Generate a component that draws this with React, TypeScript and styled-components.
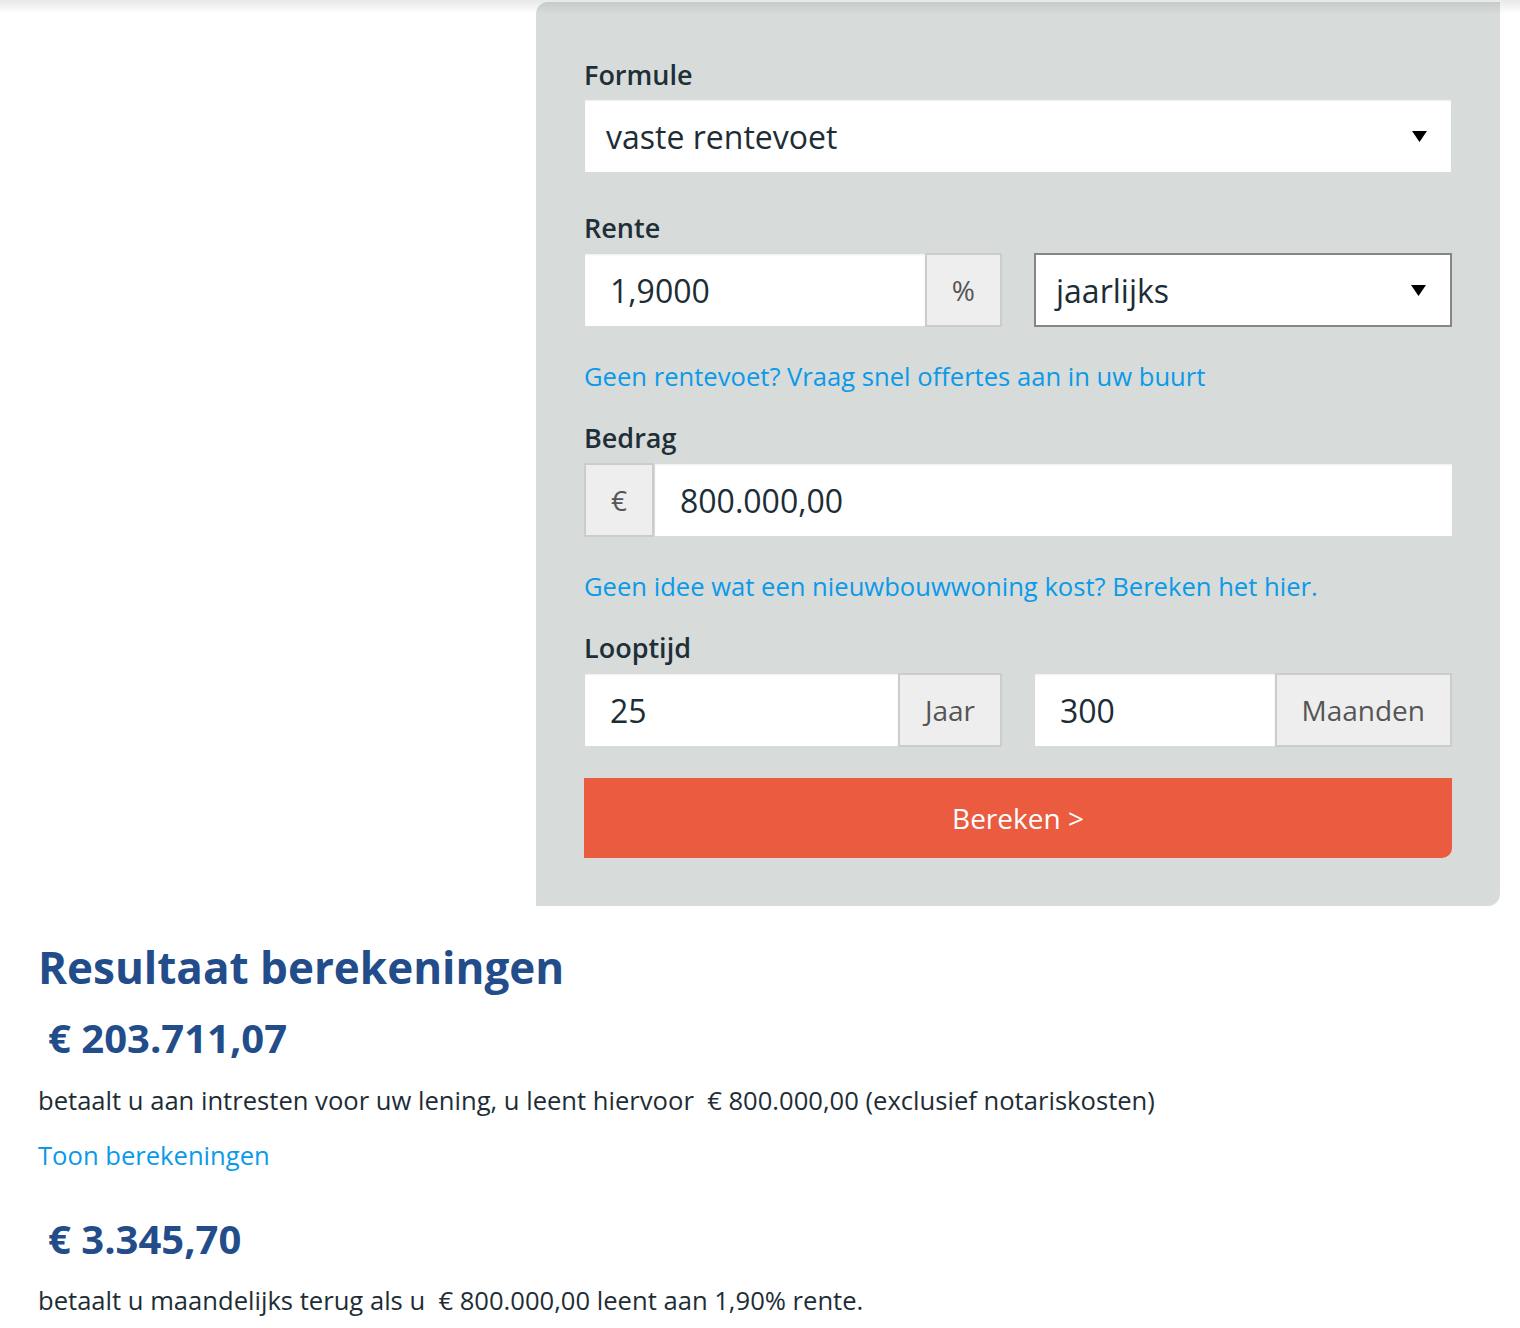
import React from "react";
import styled, { createGlobalStyle } from "styled-components";

const GlobalStyle = createGlobalStyle`
  body {
    margin: 0;
    background: #ffffff;
    font-family: "Open Sans", "Liberation Sans", sans-serif;
    color: #1e2f38;
  }
  * {
    box-sizing: border-box;
  }
`;

const Page = styled.div`
  position: relative;
  padding: 2px 20px 40px 38px;
`;

const TopShadow = styled.div`
  position: absolute;
  top: 0;
  left: 0;
  right: 0;
  height: 14px;
  background: linear-gradient(rgba(0, 0, 0, 0.09), rgba(0, 0, 0, 0));
  pointer-events: none;
`;

const TopRow = styled.div`
  display: flex;
  justify-content: flex-end;
`;

const Panel = styled.div`
  width: 964px;
  background: #d7dbda;
  border-radius: 12px 0 12px 0;
  padding: 55px 48px 48px;
  display: flex;
  flex-direction: column;
`;

const Field = styled.div<{ $top?: number }>`
  display: flex;
  flex-direction: column;
  gap: 7px;
  margin-top: ${(p) => p.$top ?? 0}px;
`;

const Label = styled.div`
  font-size: 27px;
  line-height: 36px;
  font-weight: 600;
  color: #1e2f38;
`;

const SelectBox = styled.div<{ $bordered?: boolean }>`
  height: ${(p) => (p.$bordered ? 74 : 72)}px;
  margin: ${(p) => (p.$bordered ? "0" : "0 1px")};
  background: #ffffff;
  border: ${(p) => (p.$bordered ? "2px solid #858585" : "none")};
  box-shadow: ${(p) => (p.$bordered ? "none" : "inset 0 1px 2px rgba(0,0,0,0.07)")};
  display: flex;
  align-items: center;
  justify-content: space-between;
  padding: 0 24px 0 ${(p) => (p.$bordered ? 20 : 21)}px;
  font-size: 32px;
  color: #1d2d35;
`;

const Arrow = styled.svg`
  width: 15px;
  height: 11px;
  flex-shrink: 0;
`;

const Row = styled.div`
  display: grid;
  grid-template-columns: minmax(0, 1fr) minmax(0, 1fr);
  gap: 32px;
`;

const Group = styled.div`
  display: flex;
  height: 74px;
  min-width: 0;
`;

const Input = styled.input`
  flex: 1;
  width: 100%;
  min-width: 0;
  height: 72px;
  margin: 1px 0 1px 1px;
  border: none;
  outline: none;
  background: #ffffff;
  box-shadow: inset 0 1px 2px rgba(0, 0, 0, 0.07);
  padding: 0 0 0 25px;
  font-family: "Open Sans", "Liberation Sans", sans-serif;
  font-size: 32px;
  color: #1d2d35;
`;

const Addon = styled.div`
  display: flex;
  align-items: center;
  justify-content: center;
  padding: 0 25px;
  background: #eeeeee;
  border: 2px solid #cccccc;
  font-size: 28px;
  color: #555555;
  flex-shrink: 0;
`;

const Link = styled.a<{ $top?: number }>`
  display: block;
  margin-top: ${(p) => p.$top ?? 0}px;
  font-size: 25.6px;
  line-height: 36px;
  color: #0a9ae8;
  text-decoration: none;
  cursor: pointer;
`;

const Button = styled.button`
  margin-top: 31px;
  height: 80px;
  border: none;
  border-radius: 0 0 10px 0;
  background: #eb5b40;
  color: #ffffff;
  font-family: "Open Sans", "Liberation Sans", sans-serif;
  font-size: 28px;
  cursor: pointer;
`;

const Results = styled.div`
  margin-top: 35px;
`;

const Heading = styled.h2`
  margin: 0;
  font-size: 44px;
  line-height: 53px;
  font-weight: 700;
  color: #234d8a;
`;

const Amount = styled.div<{ $top: number }>`
  margin-top: ${(p) => p.$top}px;
  padding-left: 10px;
  font-size: 40px;
  line-height: 48px;
  font-weight: 700;
  color: #234d8a;
`;

const Text = styled.p<{ $top: number }>`
  margin: ${(p) => p.$top}px 0 0;
  font-size: 25.6px;
  line-height: 34px;
  color: #1e2d35;
`;

function DropArrow() {
  return (
    <Arrow viewBox="0 0 15 11">
      <polygon points="0,0 15,0 7.5,11" fill="#000" />
    </Arrow>
  );
}

export default function App() {
  return (
    <>
      <GlobalStyle />
      <Page>
        <TopShadow />
        <TopRow>
          <Panel>
            <Field>
              <Label>Formule</Label>
              <SelectBox>
                vaste rentevoet
                <DropArrow />
              </SelectBox>
            </Field>

            <Field $top={38}>
              <Label>Rente</Label>
              <Row>
                <Group>
                  <Input defaultValue="1,9000" />
                  <Addon>%</Addon>
                </Group>
                <SelectBox $bordered>
                  jaarlijks
                  <DropArrow />
                </SelectBox>
              </Row>
            </Field>

            <Link $top={32}>Geen rentevoet? Vraag snel offertes aan in uw buurt</Link>

            <Field $top={25}>
              <Label>Bedrag</Label>
              <Group>
                <Addon>€</Addon>
                <Input defaultValue="800.000,00" />
              </Group>
            </Field>

            <Link $top={32}>Geen idee wat een nieuwbouwwoning kost? Bereken het hier.</Link>

            <Field $top={25}>
              <Label>Looptijd</Label>
              <Row>
                <Group>
                  <Input defaultValue="25" />
                  <Addon>Jaar</Addon>
                </Group>
                <Group>
                  <Input defaultValue="300" />
                  <Addon>Maanden</Addon>
                </Group>
              </Row>
            </Field>

            <Button>Bereken &gt;</Button>
          </Panel>
        </TopRow>

        <Results>
          <Heading>Resultaat berekeningen</Heading>
          <Amount $top={20}>€ 203.711,07</Amount>
          <Text $top={22}>
            betaalt u aan intresten voor uw lening, u leent hiervoor&nbsp; € 800.000,00 (exclusief notariskosten)
          </Text>
          <Link $top={20}>Toon berekeningen</Link>
          <Amount $top={41}>€ 3.345,70</Amount>
          <Text $top={21}>betaalt u maandelijks terug als u&nbsp; € 800.000,00 leent aan 1,90% rente.</Text>
        </Results>
      </Page>
    </>
  );
}
